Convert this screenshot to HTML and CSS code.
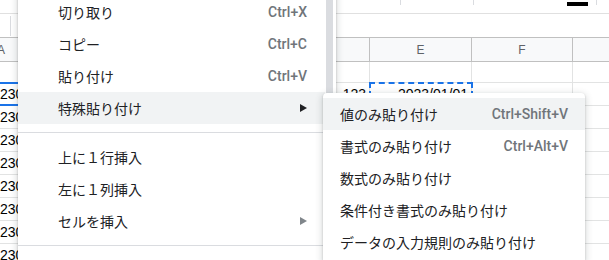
FILE: index.html
```html
<!DOCTYPE html>
<html lang="ja">
<head>
    <meta charset="UTF-8">
    <title>特殊貼り付け</title>
    <link rel="stylesheet" href="styles.css">
</head>
<body>
    <div class="sheet">
        <div class="toolbar">
            <span class="tb-sep first"></span>
            <span class="tb-sep second"></span>
            <span class="tb-color"></span>
            <span class="tb-sep third"></span>
        </div>
        <div class="formula">
            <span class="fx-sep"></span>
        </div>
        <div class="grid-row head">
            <div class="cell">A</div>
            <div class="cell"></div>
            <div class="cell"></div>
            <div class="cell"></div>
            <div class="cell">E</div>
            <div class="cell">F</div>
            <div class="cell"></div>
        </div>
        <div class="grid-row first-row">
            <div class="cell"></div><div class="cell"></div><div class="cell"></div><div class="cell"></div><div class="cell"></div><div class="cell"></div><div class="cell"></div>
        </div>
        <div class="grid-row">
            <div class="cell num sel">2300000</div><div class="cell"></div><div class="cell"></div><div class="cell right">123</div><div class="cell right copy">2023/01/01</div><div class="cell"></div><div class="cell"></div>
        </div>
        <div class="grid-row">
            <div class="cell num">2300000</div><div class="cell"></div><div class="cell"></div><div class="cell"></div><div class="cell"></div><div class="cell"></div><div class="cell"></div>
        </div>
        <div class="grid-row">
            <div class="cell num">2300000</div><div class="cell"></div><div class="cell"></div><div class="cell"></div><div class="cell"></div><div class="cell"></div><div class="cell"></div>
        </div>
        <div class="grid-row">
            <div class="cell num">2300000</div><div class="cell"></div><div class="cell"></div><div class="cell"></div><div class="cell"></div><div class="cell"></div><div class="cell"></div>
        </div>
        <div class="grid-row">
            <div class="cell num">2300000</div><div class="cell"></div><div class="cell"></div><div class="cell"></div><div class="cell"></div><div class="cell"></div><div class="cell"></div>
        </div>
        <div class="grid-row">
            <div class="cell num">2300000</div><div class="cell"></div><div class="cell"></div><div class="cell"></div><div class="cell"></div><div class="cell"></div><div class="cell"></div>
        </div>
        <div class="grid-row">
            <div class="cell num">2300000</div><div class="cell"></div><div class="cell"></div><div class="cell"></div><div class="cell"></div><div class="cell"></div><div class="cell"></div>
        </div>
        <div class="grid-row">
            <div class="cell num">2300000</div><div class="cell"></div><div class="cell"></div><div class="cell"></div><div class="cell"></div><div class="cell"></div><div class="cell"></div>
        </div>
    </div>

    <!-- 右クリックメニュー -->
    <div class="menu">
        <div class="menu-list">
            <div class="item"><span>切り取り</span><span class="key">Ctrl+X</span></div>
            <div class="item"><span>コピー</span><span class="key">Ctrl+C</span></div>
            <div class="item"><span>貼り付け</span><span class="key">Ctrl+V</span></div>
            <div class="item active"><span>特殊貼り付け</span>
                <svg class="arrow" width="7" height="8" viewBox="0 0 7 8"><polygon points="0,0 7,4 0,8" fill="#202124"/></svg>
            </div>
            <div class="sep"></div>
            <div class="item"><span>上に１行挿入</span></div>
            <div class="item"><span>左に１列挿入</span></div>
            <div class="item"><span>セルを挿入</span>
                <svg class="arrow" width="7" height="8" viewBox="0 0 7 8"><polygon points="0,0 7,4 0,8" fill="#80868b"/></svg>
            </div>
            <div class="sep"></div>
        </div>
        <div class="menu-scroll"></div>
    </div>

    <!-- サブメニュー -->
    <div class="submenu">
        <div class="item active"><span>値のみ貼り付け</span><span class="key">Ctrl+Shift+V</span></div>
        <div class="item"><span>書式のみ貼り付け</span><span class="key">Ctrl+Alt+V</span></div>
        <div class="item"><span>数式のみ貼り付け</span></div>
        <div class="item"><span>条件付き書式のみ貼り付け</span></div>
        <div class="item"><span>データの入力規則のみ貼り付け</span></div>
    </div>
</body>
</html>
```

FILE: styles.css
```css
body {
    margin: 0;
    width: 609px;
    height: 260px;
    overflow: hidden;
    position: relative;
    background: #fff;
    font-family: "Liberation Sans", Arial, sans-serif;
}
.sheet {
    width: 609px;
    height: 260px;
    overflow: hidden;
}
.toolbar {
    display: flex;
    height: 13px;
    border-bottom: 1px solid #e0e0e0;
}
.tb-sep {
    width: 1px;
    height: 5px;
    background: #dadce0;
}
.tb-sep.first { margin-left: 400px; }
.tb-sep.second { margin-left: 72px; }
.tb-color {
    width: 21px;
    height: 4px;
    margin: 2px 0 0 93px;
    background: #000;
}
.tb-sep.third { margin-left: 8px; }
.formula {
    display: flex;
    align-items: center;
    height: 23px;
}
.fx-sep {
    width: 1px;
    height: 20px;
    margin-left: 10px;
    background: #dadce0;
}
.grid-row {
    display: grid;
    grid-template-columns: 101px 101px 101px 116px 102px 101px 101px;
    margin-left: -49px;
    height: 23px;
    box-sizing: border-box;
    border-bottom: 1px solid #e2e3e3;
}
.grid-row.head {
    height: 25px;
    background: #f8f9fa;
    border-top: 1px solid #c0c0c0;
    border-bottom: 1px solid #c0c0c0;
}
.grid-row.first-row { height: 21px; }
.cell {
    box-sizing: border-box;
    border-right: 1px solid #e2e3e3;
    display: flex;
    align-items: flex-end;
    padding: 0 3px 3px;
    font-size: 14px;
    color: #000;
    white-space: nowrap;
    overflow: hidden;
}
.head .cell {
    border-right-color: #c0c0c0;
    align-items: center;
    justify-content: center;
    padding: 0;
    font-size: 12px;
    color: #5f6368;
}
.cell.num { padding-left: 49px; }
.cell.right { justify-content: flex-end; }
.cell.sel {
    outline: 2px solid #1a73e8;
    outline-offset: -1px;
}
.cell.copy {
    overflow: visible;
    outline: 2px dashed #1a73e8;
    outline-offset: -1px;
}

.menu, .submenu {
    font-family: "Noto Sans CJK JP", "Noto Sans", sans-serif;
    font-size: 14px;
    color: #202124;
    background: #fff;
}
.menu {
    position: absolute;
    left: 18px;
    top: -12px;
    width: 318px;
    height: 272px;
    display: flex;
    box-shadow: 0 2px 6px 2px rgba(60,64,67,0.15), 0 1px 2px rgba(60,64,67,0.3);
}
.menu-list {
    flex: 1;
    padding: 8px 0;
}
.menu-scroll {
    width: 7px;
    margin: 0 3px 0 1px;
    background: #dadce0;
}
.item {
    display: flex;
    align-items: center;
    justify-content: space-between;
    height: 32px;
    line-height: 20px;
    padding: 0 18px 0 40px;
}
.item.active { background: #f1f3f4; }
.key {
    font-family: Roboto, "Liberation Sans", sans-serif;
    font-weight: 500;
    color: #70757a;
}
.arrow { display: block; }
.sep {
    height: 1px;
    margin: 8px 0;
    background: #dadce0;
}
.submenu {
    position: absolute;
    left: 323px;
    top: 93px;
    width: 262px;
    height: 162px;
    padding-top: 5px;
    border-radius: 4px 4px 0 0;
    box-shadow: 0 2px 6px 2px rgba(60,64,67,0.15), 0 1px 2px rgba(60,64,67,0.3);
}
.submenu .item { padding: 0 17px; }
```
